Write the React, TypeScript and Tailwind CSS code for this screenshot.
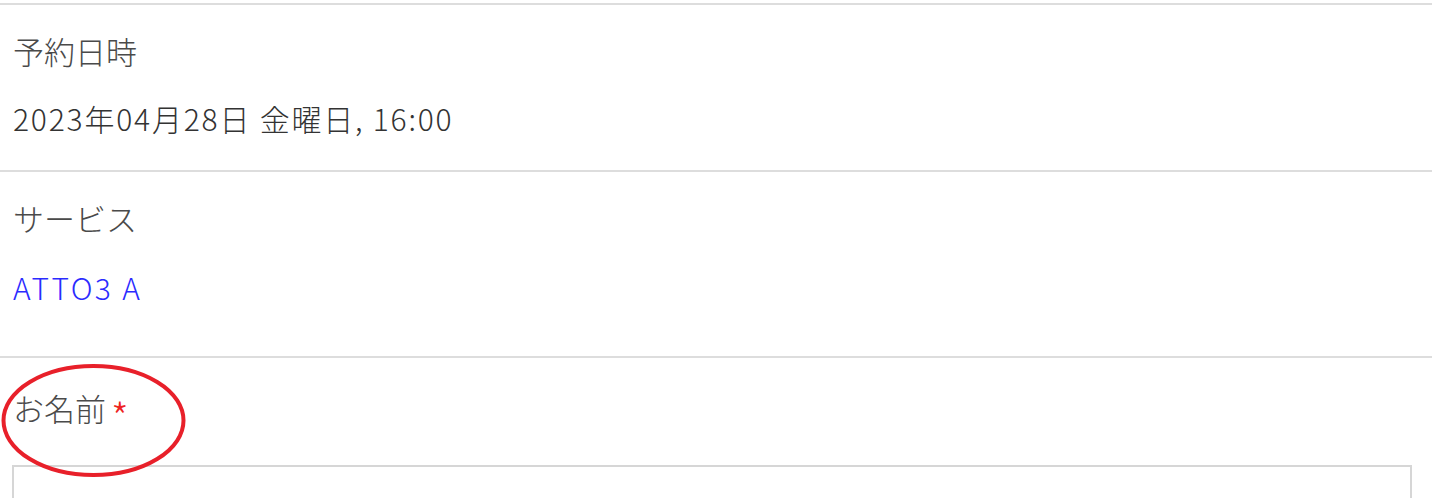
import React from 'react';

const font = { fontFamily: '"Noto Sans CJK JP", "Noto Sans", sans-serif' };

const Section: React.FC<{ label: React.ReactNode; children?: React.ReactNode; className?: string }> = ({
    label,
    children,
    className
}) => (
    <div className={`border-t-2 border-[#dddddd] ${className ?? ''}`}>
        <div className="text-[31px] leading-[40px] font-light text-[#4a4a4a]">{label}</div>
        {children}
    </div>
);

export default function App() {
    return (
        <div className="bg-white pt-[3px] pr-[5px] overflow-hidden h-[498px]" style={font}>
            <Section label="予約日時" className="pt-[26px] pb-[32px] pl-[13px]">
                <div className="mt-[27px] text-[30px] leading-[40px] tracking-[1.8px] font-light text-[#333333]">
                    2023年04月28日 金曜日, 16:00
                </div>
            </Section>

            <Section label="サービス" className="pt-[26px] pb-[49px] pl-[13px]">
                <div className="mt-[29px] text-[30px] leading-[40px] tracking-[2.4px] font-light text-[#2b2bff]">
                    ATTO3 A
                </div>
            </Section>

            <div className="relative border-t-2 border-[#dddddd] pt-[30px] pl-[13px]">
                <div className="h-[40px] text-[31px] leading-[40px] font-light text-[#4a4a4a]">
                    お名前
                    <span className="relative top-[12px] ml-[5px] text-[40px] leading-[0] text-[#ee2222]">*</span>
                </div>
                <div className="mt-[37px] -ml-px mr-[20px] h-[60px] border-2 border-[#d6d6d6] bg-white" />

                <svg
                    className="absolute left-0 top-0 pointer-events-none"
                    width="200"
                    height="130"
                    viewBox="0 0 200 130"
                >
                    <ellipse cx="93.5" cy="62.5" rx="90" ry="54.5" fill="none" stroke="#e8202a" strokeWidth="4" />
                </svg>
            </div>
        </div>
    );
}
